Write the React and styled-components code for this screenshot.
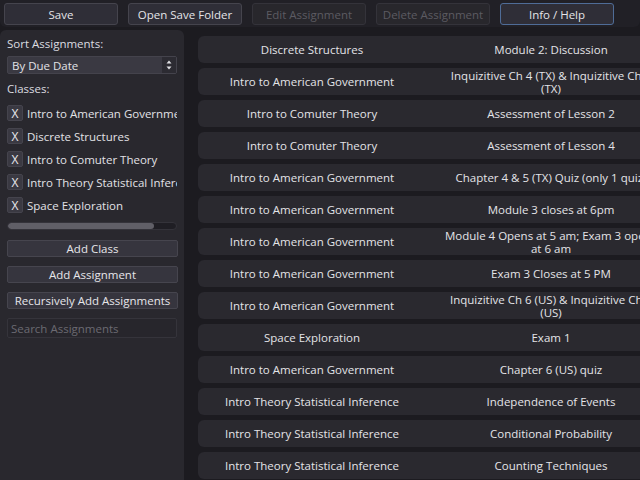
import React from "react";
import styled, { createGlobalStyle } from "styled-components";

const Global = createGlobalStyle`
  html, body {
    margin: 0;
    padding: 0;
    background: #1c1b20;
  }
  body {
    font-family: "Open Sans", "Noto Sans", sans-serif;
    font-size: 11.5px;
    color: #e2e2e6;
  }
`;

const Screen = styled.div`
  width: 640px;
  height: 480px;
  overflow: hidden;
  display: flex;
  flex-direction: column;
  gap: 3px;
  background: #1c1b20;
`;

const Toolbar = styled.div`
  display: flex;
  gap: 10px;
  padding: 3px 4px 2px;
  height: 22px;
  background: #212026;
  border-radius: 0 0 6px 6px;
`;

const TopButton = styled.button`
  width: 114px;
  height: 22px;
  padding: 0;
  font-family: inherit;
  font-size: 11.5px;
  border-radius: 3px;
  border: 1px solid ${(p) => (p.focused ? "#4f6c97" : p.disabled ? "#34333a" : "#45444d")};
  background: ${(p) => (p.disabled ? "#28272c" : "#2f2e37")};
  color: ${(p) => (p.disabled ? "#5c5b62" : "#e4e4e8")};
`;

const Main = styled.div`
  flex: 1;
  display: flex;
  gap: 14px;
  min-height: 0;
`;

const Sidebar = styled.div`
  width: 184px;
  flex-shrink: 0;
  box-sizing: border-box;
  background: #29282e;
  border-radius: 6px 6px 0 0;
  padding: 7px 7px 0 7px;
  display: flex;
  flex-direction: column;
`;

const Label = styled.div`
  line-height: 14px;
  color: #dcdce0;
  margin-bottom: ${(p) => p.mb || 0}px;
`;

const Select = styled.div`
  height: 18px;
  width: 170px;
  display: flex;
  align-items: center;
  box-sizing: border-box;
  background: #3a3942;
  border: 1px solid #44434c;
  border-radius: 2px;
  margin-bottom: 8px;
`;

const SelectText = styled.span`
  flex: 1;
  padding-left: 4px;
  color: #e2e2e6;
`;

const SelectArrow = styled.span`
  width: 14px;
  height: 16px;
  display: flex;
  align-items: center;
  justify-content: center;
  background: #2c2b32;
`;

const ClassList = styled.div`
  display: flex;
  flex-direction: column;
  gap: 7px;
  margin-top: 9px;
  width: 170px;
  overflow: hidden;
`;

const ClassRow = styled.div`
  display: flex;
  align-items: center;
  gap: 4px;
  height: 16px;
  white-space: nowrap;
`;

const RemoveButton = styled.div`
  width: 16px;
  height: 16px;
  flex-shrink: 0;
  box-sizing: border-box;
  display: flex;
  align-items: center;
  justify-content: center;
  background: #3a3942;
  border: 1px solid #45444d;
  border-radius: 2px;
  color: #e8e8ec;
  font-size: 12px;
`;

const ScrollTrack = styled.div`
  margin-top: 9px;
  width: 170px;
  height: 8px;
  box-sizing: border-box;
  background: #1f1e24;
  border: 1px solid #34333a;
  border-radius: 4px;
  overflow: hidden;
`;

const ScrollGrab = styled.div`
  height: 100%;
  background: #605f67;
  border-radius: 3px;
`;

const SideButton = styled.button`
  width: 171px;
  height: 17px;
  padding: 0;
  margin-top: ${(p) => p.mt}px;
  font-family: inherit;
  font-size: 11.5px;
  line-height: 14px;
  color: #e6e6ea;
  background: #36353e;
  border: 1px solid #46454e;
  border-radius: 2px;
  white-space: nowrap;
`;

const Search = styled.div`
  margin-top: 9px;
  width: 170px;
  height: 20px;
  box-sizing: border-box;
  padding-left: 3px;
  display: flex;
  align-items: center;
  background: #27262c;
  border: 1px solid #35343b;
  border-radius: 2px;
  color: #6b6a72;
`;

const List = styled.div`
  display: flex;
  flex-direction: column;
  gap: 5px;
  padding-top: 6px;
`;

const Row = styled.div`
  width: 700px;
  height: 27px;
  flex-shrink: 0;
  display: grid;
  grid-template-columns: 228px 220px;
  column-gap: 15px;
  background: #2a292f;
  border-radius: 6px;
`;

const Cell = styled.div`
  display: flex;
  flex-direction: column;
  align-items: center;
  justify-content: center;
  line-height: 13px;
  white-space: nowrap;
  color: #e4e4e8;
`;

const classes = [
  "Intro to American Government",
  "Discrete Structures",
  "Intro to Comuter Theory",
  "Intro Theory Statistical Inference",
  "Space Exploration",
];

const gov = "Intro to American Government";
const ct = "Intro to Comuter Theory";
const stat = "Intro Theory Statistical Inference";

const assignments = [
  ["Discrete Structures", ["Module 2: Discussion"]],
  [gov, ["Inquizitive Ch 4 (TX) & Inquizitive Ch 5", "(TX)"]],
  [ct, ["Assessment of Lesson 2"]],
  [ct, ["Assessment of Lesson 4"]],
  [gov, ["Chapter 4 & 5 (TX) Quiz (only 1 quiz)"]],
  [gov, ["Module 3 closes at 6pm"]],
  [gov, ["Module 4 Opens at 5 am; Exam 3 opens", "at 6 am"]],
  [gov, ["Exam 3 Closes at 5 PM"]],
  [gov, ["Inquizitive Ch 6 (US) & Inquizitive Ch 7", "(US)"]],
  ["Space Exploration", ["Exam 1"]],
  [gov, ["Chapter 6 (US) quiz"]],
  [stat, ["Independence of Events"]],
  [stat, ["Conditional Probability"]],
  [stat, ["Counting Techniques"]],
];

const UpDown = () => (
  <svg width="6" height="10" viewBox="0 0 6 10">
    <path d="M3 0.5 L5.5 3.5 L0.5 3.5 Z" fill="#e0e0e4" />
    <path d="M3 9.5 L5.5 6.5 L0.5 6.5 Z" fill="#e0e0e4" />
  </svg>
);

const App = () => {
  return (
    <>
      <Global />
      <Screen>
        <Toolbar>
          <TopButton>Save</TopButton>
          <TopButton>Open Save Folder</TopButton>
          <TopButton disabled>Edit Assignment</TopButton>
          <TopButton disabled>Delete Assignment</TopButton>
          <TopButton focused>Info / Help</TopButton>
        </Toolbar>
        <Main>
          <Sidebar>
            <Label mb={5}>Sort Assignments:</Label>
            <Select>
              <SelectText>By Due Date</SelectText>
              <SelectArrow>
                <UpDown />
              </SelectArrow>
            </Select>
            <Label>Classes:</Label>
            <ClassList>
              {classes.map((c) => (
                <ClassRow key={c}>
                  <RemoveButton>X</RemoveButton>
                  {c}
                </ClassRow>
              ))}
            </ClassList>
            <ScrollTrack>
              <ScrollGrab style={{ width: "87%" }} />
            </ScrollTrack>
            <SideButton mt={10}>Add Class</SideButton>
            <SideButton mt={9}>Add Assignment</SideButton>
            <SideButton mt={9}>Recursively Add Assignments</SideButton>
            <Search>Search Assignments</Search>
          </Sidebar>
          <List>
            {assignments.map(([cls, lines], i) => (
              <Row key={i}>
                <Cell>{cls}</Cell>
                <Cell>
                  {lines.map((l) => (
                    <span key={l}>{l}</span>
                  ))}
                </Cell>
              </Row>
            ))}
          </List>
        </Main>
      </Screen>
    </>
  );
};

export default App;
